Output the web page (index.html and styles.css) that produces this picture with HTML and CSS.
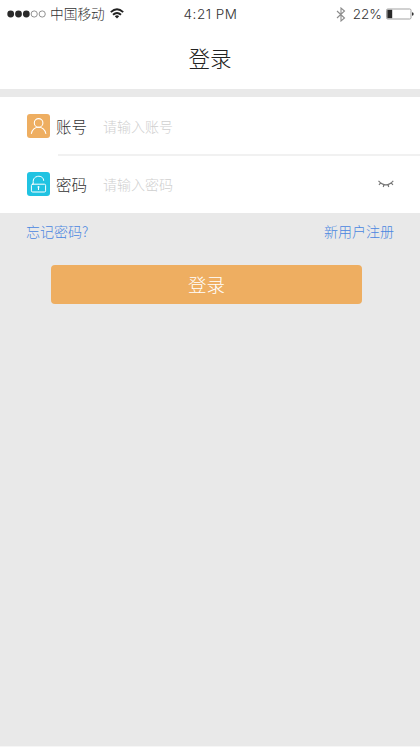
FILE: index.html
```html
<!DOCTYPE html>
<html lang="zh-CN">
<head>
<meta charset="utf-8">
<title>登录</title>
<link rel="stylesheet" href="styles.css">
</head>
<body>
<main class="screen">
  <div class="status">
    <div class="status-left">
      <svg class="signal" width="40" height="8" viewBox="0 0 40 8"><g fill="#292929"><circle cx="3.7" cy="4" r="3.4"/><circle cx="11.5" cy="4" r="3.4"/><circle cx="19.3" cy="4" r="3.4"/></g><g fill="none" stroke="#777" stroke-width=".8"><circle cx="27.2" cy="4" r="3.1"/><circle cx="35.2" cy="4" r="3.1"/></g></svg>
      <span class="carrier">中国移动</span>
      <svg class="wifi" width="14" height="11" viewBox="0 0 14 11" fill="none" stroke="#222" stroke-width="1.9"><path d="M.8 4.1Q7-1.5 13.2 4.1M3 6.8Q7 3.2 11 6.8"/><path d="M4.8 8.2Q7 6.5 9.2 8.2L7 10.5Z" fill="#222" stroke="none"/></svg>
    </div>
    <span class="time">4:21 PM</span>
    <div class="status-right">
      <svg class="bluetooth" width="10" height="15" viewBox="0 0 10 15" fill="none" stroke="#8c8c8c" stroke-width="1.1"><path d="M1 4L8.5 11L5 14V1L8.5 4L1 11"/></svg>
      <span class="percent">22%</span>
      <svg class="battery" width="28" height="12" viewBox="0 0 28 12"><rect x=".5" y="1" width="24.5" height="10" rx="1.3" fill="#fff" stroke="#999" stroke-width=".9"/><rect x="1.3" y="1.8" width="4.9" height="8.4" fill="#292929"/><path d="M26 4.3Q27.7 4.5 27.7 6T26 7.7Z" fill="#333"/></svg>
    </div>
  </div>
  <h1 class="title">登录</h1>
  <form class="form">
    <div class="fields">
      <div class="row">
        <svg class="icon icon-user" width="23" height="24" viewBox="0 0 23 24" fill="none" stroke="#fff" stroke-width="1.1" stroke-linecap="round"><circle cx="11.6" cy="8.9" r="4.3"/><path d="M4.4 19.5C5.4 15.2 8 13.2 11.6 13.2S17.8 15.2 18.8 19.5"/></svg>
        <span class="label">账号</span>
        <span class="hint">请输入账号</span>
      </div>
      <div class="divider"></div>
      <div class="row row-last">
        <svg class="icon icon-lock" width="23" height="24" viewBox="0 0 23 24" fill="none" stroke="#fff" stroke-linecap="round"><rect x="4.4" y="12.2" width="14.2" height="7.8" rx="1.2"/><path d="M6.2 12V9.5C6.2 2.6 16.7 2.6 16.7 8.4"/><path d="M11.5 15.7V17.5" stroke-width="1.1"/><circle cx="11.5" cy="15" r="1" fill="#fff" stroke="none"/></svg>
        <span class="label">密码</span>
        <span class="hint">请输入密码</span>
        <svg class="eye" width="16" height="8" viewBox="0 0 16 8" fill="none" stroke="#777" stroke-width="1.2"><path d="M.5 .8Q7.9 8.8 15.3 .8M2.6 2.9L1 5M5.9 4.5L5.3 7M10 4.5L10.7 7M13.3 2.9L14.9 5"/></svg>
      </div>
    </div>
    <nav class="links"><a>忘记密码?</a><a>新用户注册</a></nav>
    <button class="submit" type="button">登录</button>
  </form>
</main>
</body>
</html>
```
FILE: styles.css
```css
* { box-sizing: border-box; }
body {
  margin: 0;
  background: #f6f6f6;
  font-family: "Noto Sans CJK SC", sans-serif;
  font-weight: 300;
  color: #333;
}
svg { display: block; flex: none; }
.screen { height: 747px; background: #fff; display: flex; flex-direction: column; overflow: hidden; }
.status {
  height: 28px;
  padding: 0 6px 0 7px;
  display: grid;
  grid-template-columns: 1fr auto 1fr;
  align-items: center;
  white-space: nowrap;
}
.status-left, .status-right { display: flex; align-items: center; }
.status-right { justify-content: flex-end; }
.carrier { height: 28px; line-height: 26px; font-size: 13.7px; margin: 0 5px 0 3px; }
.wifi { margin-bottom: 1px; }
.time, .percent { font-family: Inter, "Liberation Sans", sans-serif; line-height: 28px; color: #333; }
.time { font-size: 13.5px; letter-spacing: .5px; }
.percent { font-size: 13.5px; margin: 0 4px 0 7px; }
.title { margin: 0; height: 61px; line-height: 59px; text-align: center; font-size: 21.5px; font-weight: 300; color: #222; }
.form { flex: 1; background: #e9e9e9; padding-top: 8px; border-bottom: 1px solid #f6f6f6; }
.fields { background: #fff; }
.row { height: 57px; padding: 0 26px 0 27px; display: flex; align-items: center; }
.row-last { padding-bottom: 2px; }
.divider { height: 2px; margin-left: 58px; background: #f1f1f1; }
.icon { border-radius: 3px; }
.icon-user { background: #eeae61; }
.icon-lock { background: #20c3e2; }
.label { width: 47px; padding-left: 6px; font-size: 15.5px; white-space: nowrap; }
.hint { flex: 1; padding-left: 6px; font-size: 14px; color: #cfcfcf; }
.links { height: 52px; padding: 0 26px; display: flex; justify-content: space-between; font-size: 14px; line-height: 36px; color: #4a86e0; }
.submit {
  display: block;
  width: 311px;
  height: 39px;
  margin: 0 auto 0 51px;
  padding: 0;
  border: 0;
  border-radius: 4px;
  background: #eeae61;
  color: #fff;
  font: 300 18.5px/39px "Noto Sans CJK SC", sans-serif;
}
```
